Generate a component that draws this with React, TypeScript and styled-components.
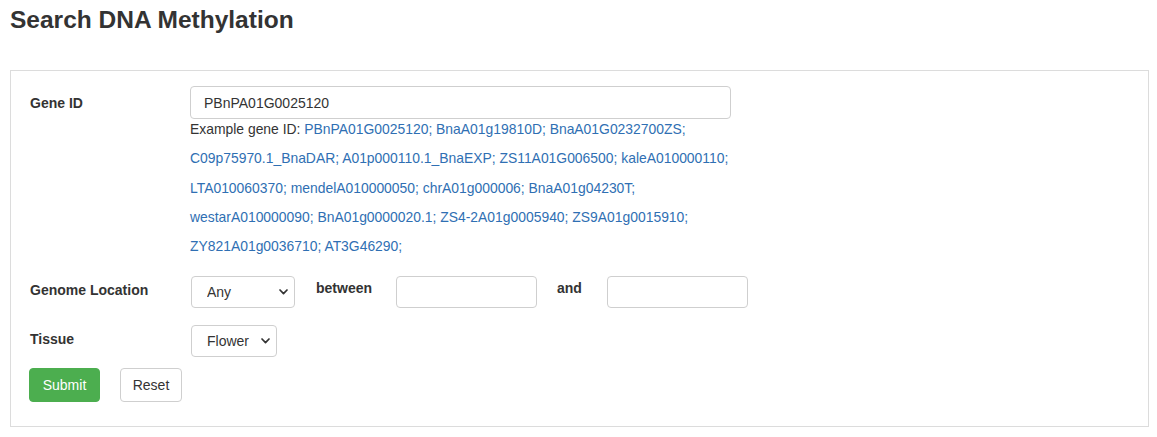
import React from "react";
import styled, { createGlobalStyle } from "styled-components";

const GlobalStyle = createGlobalStyle`
  html, body { margin: 0; padding: 0; background: #fff; }
  body {
    font-family: "Liberation Sans", Arial, Helvetica, sans-serif;
    font-size: 14px;
    color: #333;
  }
  * { box-sizing: border-box; }
`;

const Page = styled.div`
  padding: 0 8px 0 10px;
`;

const Title = styled.h3`
  margin: 0;
  padding-top: 6px;
  height: 70px;
  font-size: 24.5px;
  line-height: 28px;
  font-weight: 700;
  color: #333;
`;

const Panel = styled.form`
  width: 1139px;
  border: 1px solid #dcdcdc;
  padding: 15px 19px 24px 19px;
`;

const Row = styled.div<{ $mb?: number }>`
  display: flex;
  align-items: flex-start;
  margin-bottom: ${(p) => p.$mb ?? 0}px;
`;

const Label = styled.label<{ $pt: number }>`
  width: 160px;
  flex: none;
  font-weight: 700;
  font-size: 14px;
  line-height: 20px;
  padding-top: ${(p) => p.$pt}px;
`;

const InlineLabel = styled.span<{ $ml: number; $mr: number }>`
  font-weight: 700;
  font-size: 14px;
  line-height: 20px;
  padding-top: 2px;
  margin: 0 ${(p) => p.$mr}px 0 ${(p) => p.$ml}px;
`;

const Field = styled.div`
  display: flex;
  flex-direction: column;
`;

const TextInput = styled.input<{ $w: number; $h: number }>`
  width: ${(p) => p.$w}px;
  height: ${(p) => p.$h}px;
  border: 1px solid #cfcfcf;
  border-radius: 4px;
  padding: 0 13px;
  font-family: inherit;
  font-size: 14px;
  color: #333;
  background: #fff;
  outline: none;
`;

const Examples = styled.div`
  width: 580px;
  margin-top: -4px;
  font-size: 13.9px;
  line-height: 29.25px;
  color: #333;
`;

const ExLink = styled.a`
  color: #2f6fb3;
  text-decoration: none;
`;

const SelectWrap = styled.div<{ $w: number }>`
  position: relative;
  width: ${(p) => p.$w}px;
  height: 32px;
  margin-left: 1px;
`;

const Select = styled.select`
  appearance: none;
  -webkit-appearance: none;
  width: 100%;
  height: 100%;
  border: 1px solid #cfcfcf;
  border-radius: 4px;
  background: #fff;
  padding: 0 0 0 15px;
  font-family: inherit;
  font-size: 14px;
  color: #333;
  outline: none;
`;

const Chevron = styled.svg`
  position: absolute;
  right: 7px;
  top: 13px;
  width: 9px;
  height: 6px;
  pointer-events: none;
`;

const Buttons = styled.div`
  display: flex;
  gap: 20px;
  margin-left: -1px;
`;

const Button = styled.button<{ $primary?: boolean; $w: number }>`
  width: ${(p) => p.$w}px;
  height: 34px;
  border-radius: 4px;
  font-family: inherit;
  font-size: 14px;
  cursor: pointer;
  border: 1px solid ${(p) => (p.$primary ? "#4cae4f" : "#cfcfcf")};
  background: ${(p) => (p.$primary ? "#4cae4f" : "#fff")};
  color: ${(p) => (p.$primary ? "#fff" : "#333")};
`;

const examples = [
  "PBnPA01G0025120",
  "BnaA01g19810D",
  "BnaA01G0232700ZS",
  "C09p75970.1_BnaDAR",
  "A01p000110.1_BnaEXP",
  "ZS11A01G006500",
  "kaleA010000110",
  "LTA010060370",
  "mendelA010000050",
  "chrA01g000006",
  "BnaA01g04230T",
  "westarA010000090",
  "BnA01g0000020.1",
  "ZS4-2A01g0005940",
  "ZS9A01g0015910",
  "ZY821A01g0036710",
  "AT3G46290",
];

const breakAfter = new Set(["BnaA01G0232700ZS", "kaleA010000110", "BnaA01g04230T", "ZS9A01g0015910"]);

function SelectBox({ w, options, value }: { w: number; options: string[]; value: string }) {
  return (
    <SelectWrap $w={w}>
      <Select defaultValue={value}>
        {options.map((o) => (
          <option key={o}>{o}</option>
        ))}
      </Select>
      <Chevron viewBox="0 0 9 6">
        <path d="M1 1 L4.5 4.6 L8 1" fill="none" stroke="#333" strokeWidth="1.7" strokeLinecap="round" strokeLinejoin="round" />
      </Chevron>
    </SelectWrap>
  );
}

export default function App() {
  return (
    <Page>
      <GlobalStyle />
      <Title>Search DNA Methylation</Title>
      <Panel onSubmit={(e) => e.preventDefault()}>
        <Row $mb={15}>
          <Label $pt={7}>Gene ID</Label>
          <Field>
            <TextInput $w={541} $h={33} defaultValue="PBnPA01G0025120" />
            <Examples>
              Example gene ID:{" "}
              {examples.map((ex) => (
                <React.Fragment key={ex}>
                  <ExLink href="#">{ex};</ExLink>
                  {breakAfter.has(ex) ? <br /> : " "}
                </React.Fragment>
              ))}
            </Examples>
          </Field>
        </Row>
        <Row $mb={17}>
          <Label $pt={4}>Genome Location</Label>
          <SelectBox w={104} options={["Any", "A01", "A02", "C01"]} value="Any" />
          <InlineLabel $ml={21} $mr={24}>between</InlineLabel>
          <TextInput $w={141} $h={32} />
          <InlineLabel $ml={20} $mr={25}>and</InlineLabel>
          <TextInput $w={141} $h={32} />
        </Row>
        <Row $mb={11}>
          <Label $pt={4}>Tissue</Label>
          <SelectBox w={86} options={["Flower", "Leaf", "Root", "Stem"]} value="Flower" />
        </Row>
        <Buttons>
          <Button type="submit" $primary $w={71}>Submit</Button>
          <Button type="reset" $w={62}>Reset</Button>
        </Buttons>
      </Panel>
    </Page>
  );
}
